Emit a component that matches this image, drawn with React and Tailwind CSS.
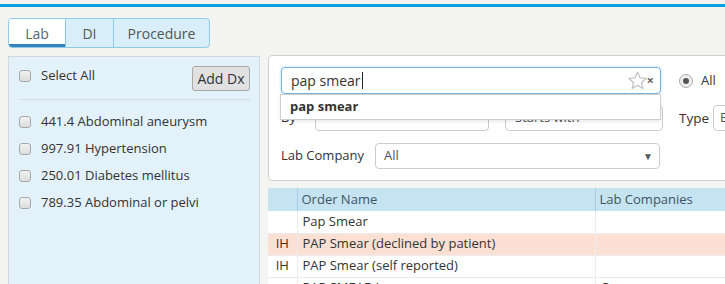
import { useState } from "react";

function Box() {
  return (
    <span className="inline-block w-[12px] h-[12px] rounded-[3px] border border-[#a9a9a9] bg-gradient-to-b from-[#f2f2f2] to-[#dcdcdc] shrink-0" />
  );
}

function Star() {
  return (
    <svg width="21" height="21" viewBox="0 0 24 24" className="shrink-0">
      <path
        d="M12 2.5l2.9 6.4 6.9.7-5.2 4.7 1.5 6.9L12 17.6l-6.1 3.6 1.5-6.9-5.2-4.7 6.9-.7z"
        fill="none"
        stroke="#c4c4c4"
        strokeWidth="1.5"
        strokeLinejoin="round"
      />
    </svg>
  );
}

const dx = [
  "441.4 Abdominal aneurysm",
  "997.91 Hypertension",
  "250.01 Diabetes mellitus",
  "789.35 Abdominal or pelvi",
];

const rows = [
  { ih: "", name: "Pap Smear", lab: "", hl: false },
  { ih: "IH", name: "PAP Smear (declined by patient)", lab: "", hl: true },
  { ih: "IH", name: "PAP Smear (self reported)", lab: "", hl: false },
  { ih: "", name: "PAP SMEAR L", lab: "Q", hl: false },
];

export default function App() {
  const [tab] = useState("Lab");

  return (
    <div
      className="w-[725px] h-[284px] overflow-hidden bg-[#f4f4f2] text-[13px] text-[#333] pt-[4px]"
      style={{ fontFamily: '"Open Sans", "Liberation Sans", sans-serif' }}
    >
      <div className="h-[3px] bg-[#0aa0dc]" />

      <div className="flex items-start pl-[8px] pt-[11px] gap-[8px]">
        {/* left column */}
        <div className="w-[252px] shrink-0">
          <div className="flex h-[30px] w-[202px] rounded-[4px] border border-[#8ecbe6] overflow-hidden bg-[#d8effa] text-[14px]">
            {["Lab", "DI", "Procedure"].map((t) => (
              <div
                key={t}
                className={
                  t === tab
                    ? "w-[56px] bg-white border-b-[3px] border-[#3583bd] flex items-center justify-center pt-[4px] text-[#4d6a82]"
                    : t === "DI"
                    ? "w-[48px] border-l border-[#8ecbe6] flex items-center justify-center pt-[1px] text-[#555]"
                    : "flex-1 border-l border-[#8ecbe6] flex items-center justify-center pt-[1px] text-[#555]"
                }
              >
                {t}
              </div>
            ))}
          </div>

          <div className="mt-[8px] h-[240px] bg-[#e3f2fa] border border-[#d4d8da] pl-[10px] pr-[9px]">
            <div className="flex items-center justify-between pt-[9px] pb-[8px] border-b border-[#d6dadc]">
              <label className="flex items-center gap-[10px] -mt-[6px]">
                <Box />
                <span>Select All</span>
              </label>
              <button className="h-[25px] w-[58px] rounded-[3px] border border-[#a9a9a9] bg-[#e1e1e1] text-[14px] text-[#333]">
                Add Dx
              </button>
            </div>
            <div className="pt-[13px] flex flex-col gap-[9px]">
              {dx.map((d) => (
                <label key={d} className="flex items-center gap-[10px] h-[18px]">
                  <Box />
                  <span>{d}</span>
                </label>
              ))}
            </div>
          </div>
        </div>

        {/* right column */}
        <div className="flex-1 mt-[37px] min-w-0">
          <div className="relative bg-white border border-[#d0d0d0] rounded-[4px] pl-[12px] pt-[11px] pb-[11px] w-[480px]">
            <div className="flex items-center h-[27px]">
              <div className="w-[380px] shrink-0 h-[27px] rounded-[4px] border border-[#74b4e4] shadow-[0_0_3px_rgba(102,175,233,0.5)] flex items-center pl-[9px] pr-[6px] text-[14px]">
                <span>pap smear</span>
                <span className="w-px h-[17px] bg-[#222] ml-[1px]" />
                <span className="flex-1" />
                <Star />
                <span className="text-[13px] font-bold text-[#666] leading-none -ml-[1px]">×</span>
              </div>
              <span className="ml-[18px] shrink-0 w-[14px] h-[14px] rounded-full border border-[#aaa] bg-[#eee] flex items-center justify-center">
                <span className="w-[6px] h-[6px] rounded-full bg-[#555]" />
              </span>
              <span className="ml-[8px]">All</span>
            </div>

            <div className="flex items-center mt-[11px] h-[26px]">
              <span className="w-[34px] shrink-0">By</span>
              <div className="w-[174px] shrink-0 h-[26px] rounded-[4px] border border-[#ccc]" />
              <div className="ml-[16px] shrink-0 w-[158px] h-[26px] rounded-[4px] border border-[#ccc] pl-[9px] flex items-center text-[#555]">
                Starts with
              </div>
              <span className="ml-[16px] shrink-0 text-[13.5px]">Type</span>
              <div className="ml-[4px] shrink-0 w-[60px] h-[26px] rounded-l-[4px] border border-[#ccc] pl-[6px] flex items-center text-[#555]">
                B
              </div>
            </div>

            <div className="flex items-center mt-[12px] h-[26px]">
              <span className="w-[94px] shrink-0">Lab Company</span>
              <div className="w-[285px] shrink-0 h-[26px] rounded-[4px] border border-[#ccc] pl-[8px] pr-[6px] flex items-center justify-between text-[#555]">
                <span>All</span>
                <span className="text-[10px] text-[#555]">▼</span>
              </div>
            </div>

            <div className="absolute left-[11px] top-[38px] w-[381px] h-[26px] bg-white border border-[#cfcfcf] shadow-[0_2px_3px_rgba(0,0,0,0.08)] pl-[9px] flex items-center font-bold">
              pap smear
            </div>
          </div>

          <table className="mt-[7px] w-[480px] border-collapse text-[13px]">
            <thead>
              <tr className="bg-[#c6e3f1] h-[23px] text-[#3f5566]">
                <th className="w-[29px] border-r border-[#a9cde0]" />
                <th className="w-[298px] text-left font-normal pl-[4px] border-r border-[#a9cde0]">
                  Order Name
                </th>
                <th className="text-left font-normal pl-[4px]">Lab Companies</th>
              </tr>
            </thead>
            <tbody>
              {rows.map((r, i) => (
                <tr
                  key={i}
                  className={
                    (r.hl ? "bg-[#fbe0d3]" : "bg-white") +
                    " h-[22px] border-b border-[#ececec]"
                  }
                >
                  <td className="text-center border-r border-[#ececec]">{r.ih}</td>
                  <td className="pl-[5px] border-r border-[#ececec]">{r.name}</td>
                  <td className="pl-[5px]">{r.lab}</td>
                </tr>
              ))}
            </tbody>
          </table>
        </div>
      </div>
    </div>
  );
}
